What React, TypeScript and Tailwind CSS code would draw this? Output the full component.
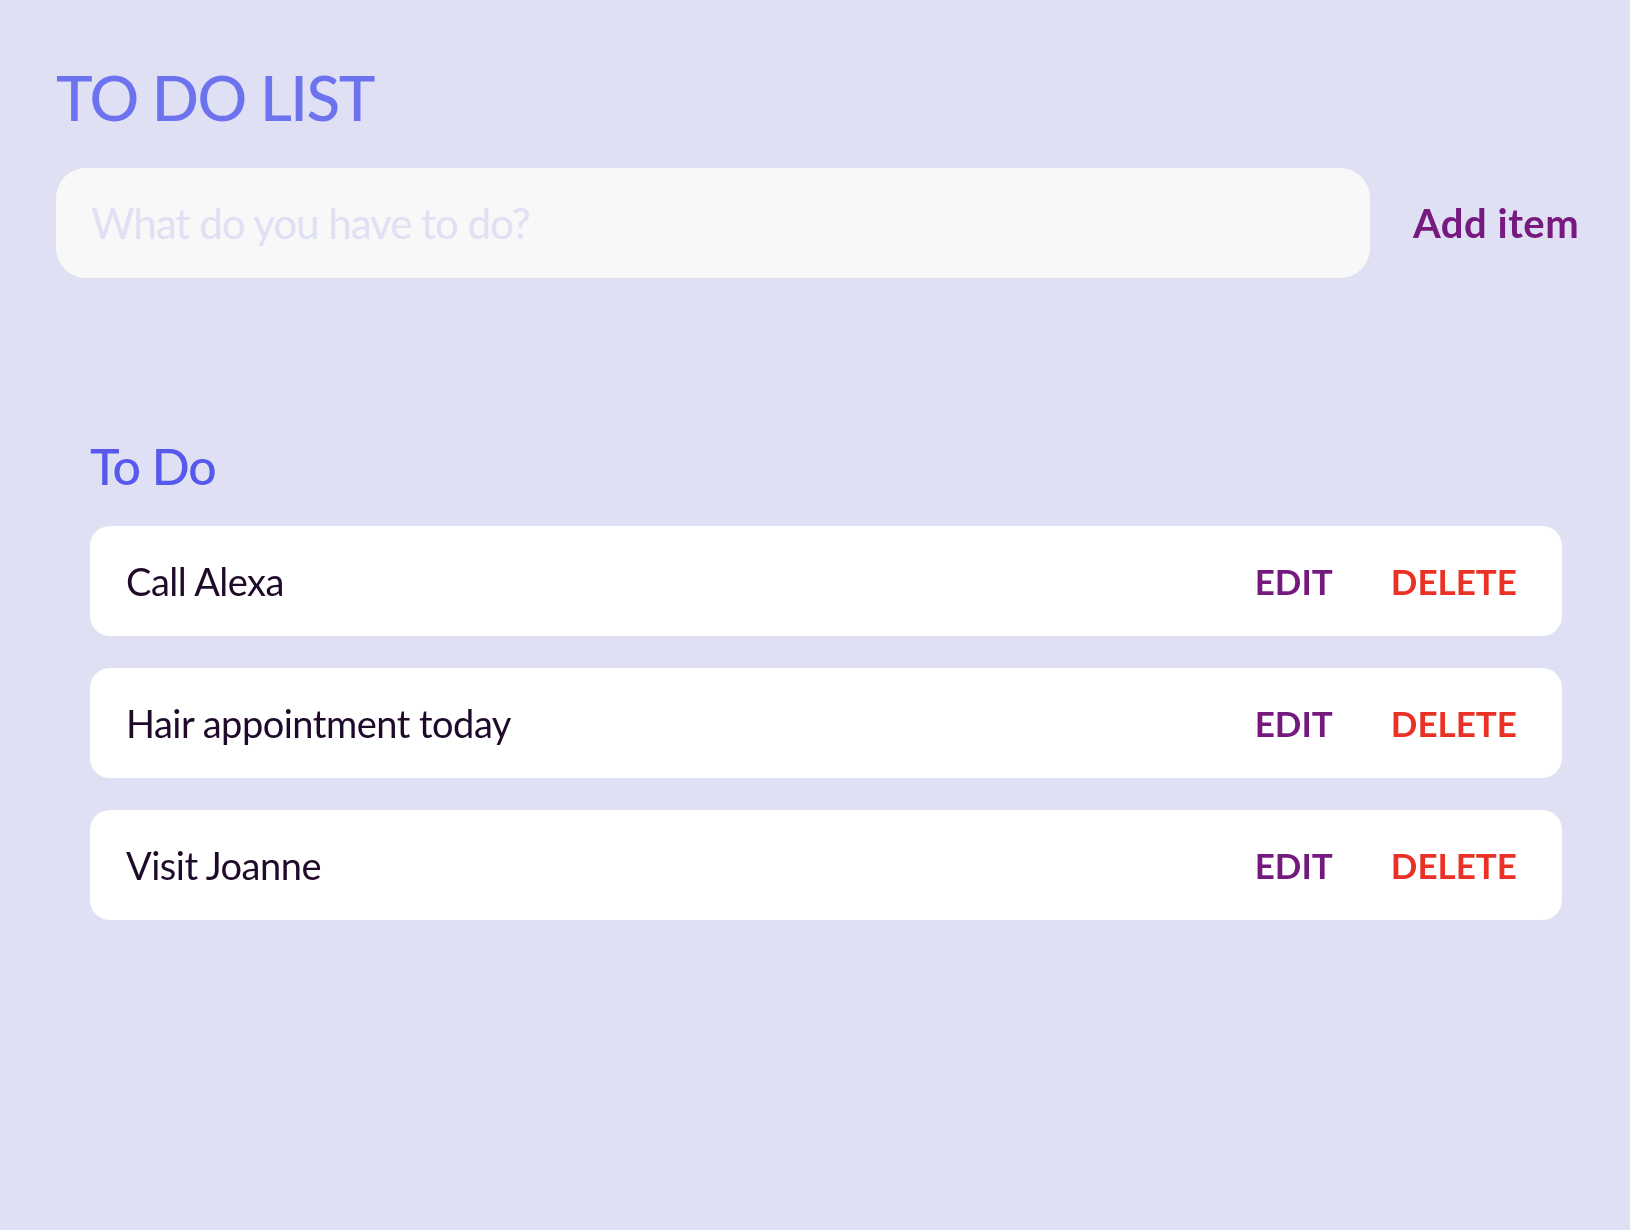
import { useState } from 'react';

type Todo = {
  id: number;
  text: string;
};

const INITIAL: Todo[] = [
  { id: 1, text: 'Call Alexa' },
  { id: 2, text: 'Hair appointment today' },
  { id: 3, text: 'Visit Joanne' },
];

function TodoRow({ todo, onDelete }: { todo: Todo; onDelete: (id: number) => void }) {
  return (
    <li className="flex h-[110px] items-center justify-between rounded-[20px] bg-white pl-[36px] pr-[45px]">
      <span className="text-[38px] tracking-[-0.5px] text-[#1f0a2a]">{todo.text}</span>
      <div className="flex items-center gap-[58px]">
        <button className="text-[35px] font-bold text-[#741a7e]">EDIT</button>
        <button
          className="text-[35px] font-bold text-[#ea3126]"
          onClick={() => onDelete(todo.id)}
        >
          DELETE
        </button>
      </div>
    </li>
  );
}

export default function App() {
  const [todos, setTodos] = useState<Todo[]>(INITIAL);
  const [draft, setDraft] = useState('');

  const addItem = () => {
    if (!draft.trim()) return;
    setTodos([...todos, { id: Date.now(), text: draft.trim() }]);
    setDraft('');
  };

  return (
    <div
      className="min-h-[1230px] bg-[#e0e0f4] pl-[56px] pt-[62px]"
      style={{ fontFamily: 'Lato, "Open Sans", sans-serif' }}
    >
      <h1 className="text-[62px] font-medium leading-[70px] tracking-[-1.5px] text-[#6d73ef]">TO DO LIST</h1>

      {/* New item */}
      <div className="mt-[36px] flex items-center">
        <input
          autoFocus
          value={draft}
          onChange={(e) => setDraft(e.target.value)}
          placeholder="What do you have to do?"
          className="h-[110px] w-[1314px] shrink-0 rounded-[30px] bg-[#f8f8f8] pl-[35px] text-[42px] tracking-[-1px] text-[#1f0a2a] caret-[#1f0a2a] outline-none placeholder:text-[#e0e0f4]"
        />
        <button
          onClick={addItem}
          className="ml-[43px] whitespace-nowrap text-[40px] font-bold tracking-[0.5px] text-[#771a80]"
        >
          Add item
        </button>
      </div>

      {/* List */}
      <section className="mt-[158px] pl-[34px] pr-[68px]">
        <h2 className="text-[50px] font-medium leading-[60px] tracking-[-1px] text-[#5659ec]">To Do</h2>
        <ul className="mt-[30px] flex flex-col gap-[32px]">
          {todos.map((t) => (
            <TodoRow key={t.id} todo={t} onDelete={(id) => setTodos(todos.filter((x) => x.id !== id))} />
          ))}
        </ul>
      </section>
    </div>
  );
}
